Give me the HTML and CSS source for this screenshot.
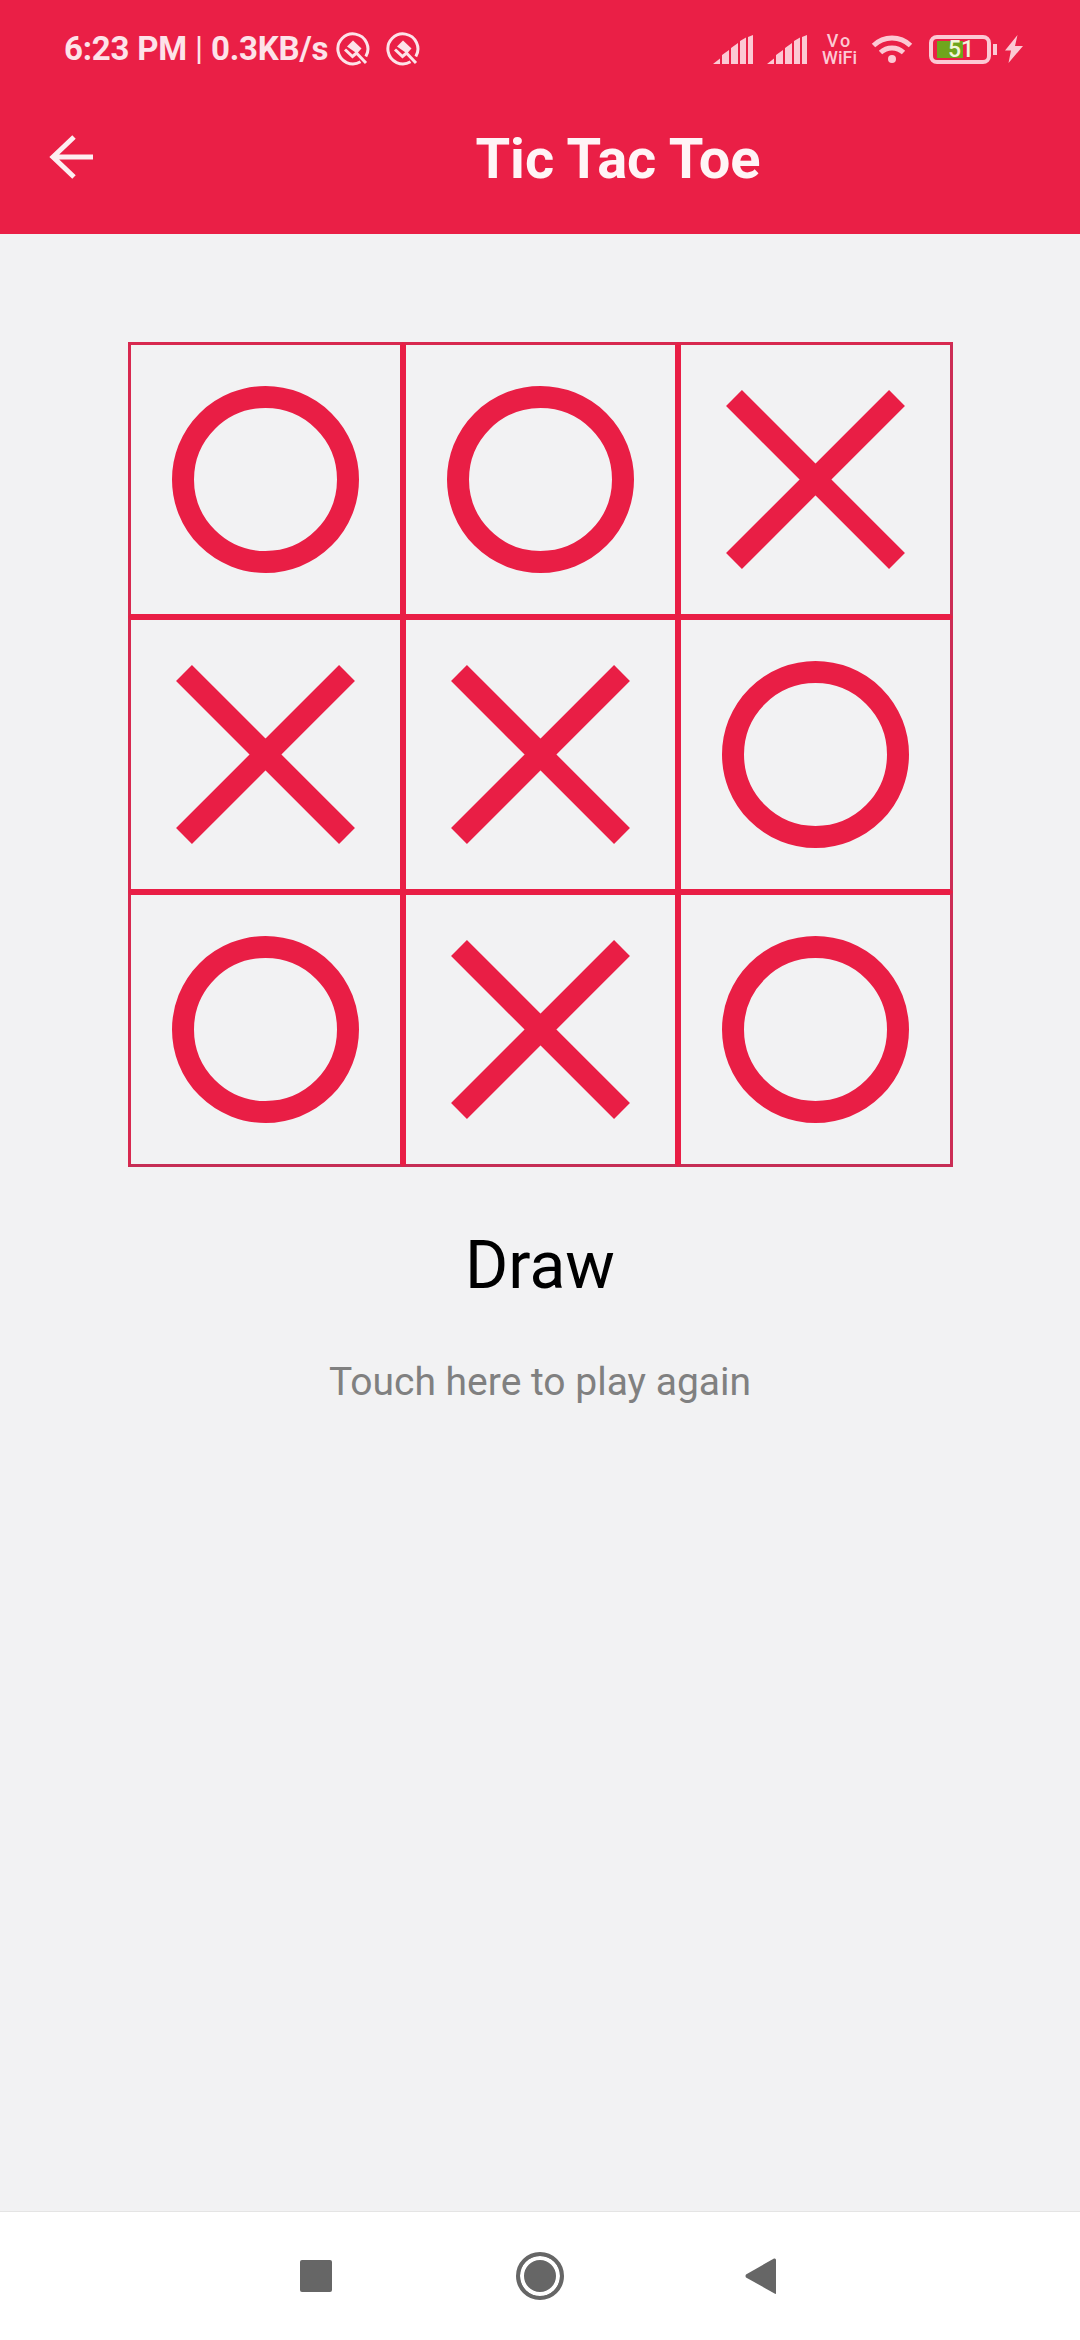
FILE: index.html
```html
<!DOCTYPE html>
<html lang="en">
<head>
    <meta charset="UTF-8">
    <meta name="viewport" content="width=device-width, initial-scale=1.0">
    <title>Tic Tac Toe</title>
    <link rel="stylesheet" href="styles.css">
</head>
<body>
    <svg class="defs" width="0" height="0">
        <symbol id="markO" viewBox="0 0 269 269">
            <circle cx="134.5" cy="134.5" r="82.5" fill="none" stroke="#e91e45" stroke-width="22"/>
        </symbol>
        <symbol id="markX" viewBox="0 0 269 269">
            <path d="M53 53L216 216M216 53L53 216" fill="none" stroke="#e91e45" stroke-width="22.5"/>
        </symbol>
        <symbol id="dnd" viewBox="0 0 34 34">
            <path d="M24.5 29.8A15 15 0 1 1 29.8 24.5" fill="none" stroke="currentColor" stroke-width="3"/>
            <path d="M17 8.5L25.5 16.5L21 21.5L11 14.5Z" fill="currentColor"/>
            <path d="M9 17.5L16.5 24.5L20.5 21L30 31" fill="none" stroke="currentColor" stroke-width="3"/>
        </symbol>
        <symbol id="signal" viewBox="0 0 40 29">
            <path d="M0 29L7 23.500V29ZM9 29V20L16 15V29ZM18 29V13L25 8V29ZM27 29V6L33 2.500V29ZM35 29V2L40 0V29Z" fill="currentColor"/>
        </symbol>
    </svg>

    <header class="top">
        <div class="status-bar">
            <span class="status-text">6:23 PM <span class="sep">|</span> 0.3KB/s</span>
            <svg class="dnd first" width="34" height="34"><use href="#dnd"/></svg>
            <svg class="dnd" width="34" height="34"><use href="#dnd"/></svg>
            <div class="status-right">
                <svg class="signal" width="40" height="29"><use href="#signal"/></svg>
                <svg class="signal" width="40" height="29"><use href="#signal"/></svg>
                <div class="vowifi"><span class="vo">Vo</span><span>WiFi</span></div>
                <svg class="wifi" width="42" height="28" viewBox="0 0 42 28">
                    <path d="M2.500 10.500C13 0.500 29 0.500 39.500 10.500M9.500 17.500C16 11.500 26 11.500 32.500 17.500" fill="none" stroke="currentColor" stroke-width="5"/>
                    <circle cx="21" cy="24" r="4" fill="currentColor"/>
                </svg>
                <div class="battery">
                    <div class="battery-body">
                        <div class="battery-level"></div>
                        <span class="battery-num">51</span>
                    </div>
                    <div class="battery-tip"></div>
                </div>
                <svg class="bolt" width="18" height="28" viewBox="0 0 18 28">
                    <path d="M12.500 0L0 15.500H6L3.500 28L18 11H10Z" fill="currentColor"/>
                </svg>
            </div>
        </div>
        <div class="app-bar">
            <svg class="back" width="46" height="46" viewBox="0 0 46 46">
                <path d="M26 3L5 23L26 43M5 23H45" fill="none" stroke="#fdeef1" stroke-width="5"/>
            </svg>
            <h1 class="title">Tic Tac Toe</h1>
        </div>
    </header>

    <main class="content">
        <div class="board">
            <div class="cell"><svg width="269" height="269"><use href="#markO"/></svg></div>
            <div class="cell"><svg width="269" height="269"><use href="#markO"/></svg></div>
            <div class="cell"><svg width="269" height="269"><use href="#markX"/></svg></div>
            <div class="cell"><svg width="269" height="269"><use href="#markX"/></svg></div>
            <div class="cell"><svg width="269" height="269"><use href="#markX"/></svg></div>
            <div class="cell"><svg width="269" height="269"><use href="#markO"/></svg></div>
            <div class="cell"><svg width="269" height="269"><use href="#markO"/></svg></div>
            <div class="cell"><svg width="269" height="269"><use href="#markX"/></svg></div>
            <div class="cell"><svg width="269" height="269"><use href="#markO"/></svg></div>
        </div>
        <p class="result">Draw</p>
        <p class="again">Touch here to play again</p>
    </main>

    <nav class="nav-bar">
        <div class="nav-square"></div>
        <div class="nav-home"></div>
        <svg class="nav-back" width="31" height="36" viewBox="0 0 31 36">
            <path d="M29 0.500Q31 0 31 2V36L29.500 35.500L1 19.500Q0 18 1 16.500Z" fill="#666"/>
        </svg>
    </nav>
</body>
</html>
```

FILE: styles.css
```css
body {
    margin: 0;
    width: 1080px;
    height: 2340px;
    display: flex;
    flex-direction: column;
    background-color: #f2f2f3;
    font-family: Roboto, "Liberation Sans", sans-serif;
    overflow: hidden;
}
.defs {
    display: block;
    height: 0;
}
.top {
    height: 234px;
    background-color: #ea1f46;
    color: #fde3e9;
}
.status-bar {
    height: 70px;
    padding: 14px 57px 0 64px;
    display: flex;
    align-items: center;
}
.status-text {
    font-size: 33px;
    font-weight: 700;
    line-height: 38px;
    letter-spacing: -0.2px;
    white-space: nowrap;
}
.sep {
    font-weight: 400;
}
.dnd {
    margin-left: 16px;
}
.dnd.first {
    margin-left: 8px;
}
.status-right {
    margin-left: auto;
    display: flex;
    align-items: center;
    color: #fcc9d4;
}
.signal {
    margin-right: 14px;
}
.vowifi {
    width: 37px;
    margin-right: 13px;
    display: flex;
    flex-direction: column;
    align-items: center;
    font-size: 18px;
    font-weight: 500;
    line-height: 17px;
}
.vo {
    letter-spacing: 2px;
}
.wifi {
    margin-right: 16px;
}
.battery {
    display: flex;
    align-items: center;
    margin-right: 8px;
}
.battery-body {
    position: relative;
    width: 62px;
    height: 29px;
    box-sizing: border-box;
    border: 4px solid #fcc9d4;
    border-radius: 8px;
}
.battery-level {
    width: 26px;
    height: 17px;
    margin: 2px 0 0 4px;
    background-color: #6fa51d;
}
.battery-num {
    position: absolute;
    left: 15px;
    top: -3px;
    font-size: 23px;
    line-height: 28px;
    font-weight: 500;
    color: #f2f6dc;
}
.battery-tip {
    width: 4px;
    height: 11px;
    margin-left: 2px;
    background-color: #fcc9d4;
}
.app-bar {
    height: 150px;
    position: relative;
    display: flex;
    align-items: center;
    justify-content: center;
}
.back {
    position: absolute;
    left: 48px;
    top: 50px;
}
.title {
    margin: 0;
    padding-left: 156px;
    font-size: 56px;
    font-weight: 700;
    color: #fff4f6;
}
.content {
    flex: 1;
    display: flex;
    flex-direction: column;
    align-items: center;
}
.board {
    margin: 108px 127px 0 128px;
    display: grid;
    grid-template-columns: repeat(3, 275px);
    grid-template-rows: repeat(3, 275px);
}
.cell {
    border: 3px solid #e91e45;
}
.cell svg {
    display: block;
}
.cell:nth-child(-n+3) {
    border-top-color: #d8294f;
}
.cell:nth-child(3n) {
    border-right-color: #cc2d55;
}
.cell:nth-child(3n+1) {
    border-left-color: #d8294f;
}
.cell:nth-child(n+7) {
    border-bottom-color: #c62d55;
}
.result {
    margin: 61px 0 0;
    font-size: 66px;
    line-height: 76px;
    color: #000;
}
.again {
    margin: 55px 0 0;
    font-size: 39px;
    line-height: 46px;
    color: #808080;
}
.nav-bar {
    height: 128px;
    border-top: 1px solid #e4e4e4;
    background-color: #fff;
    padding-left: 300px;
    display: flex;
    align-items: center;
}
.nav-square {
    width: 32px;
    height: 32px;
    border-radius: 2px;
    background-color: #666;
}
.nav-home {
    width: 48px;
    height: 48px;
    box-sizing: border-box;
    margin-left: 184px;
    border: 4px solid #666;
    border-radius: 50%;
    background-color: #666;
    box-shadow: inset 0 0 0 4px #fff;
}
.nav-back {
    margin-left: 181px;
}
```
